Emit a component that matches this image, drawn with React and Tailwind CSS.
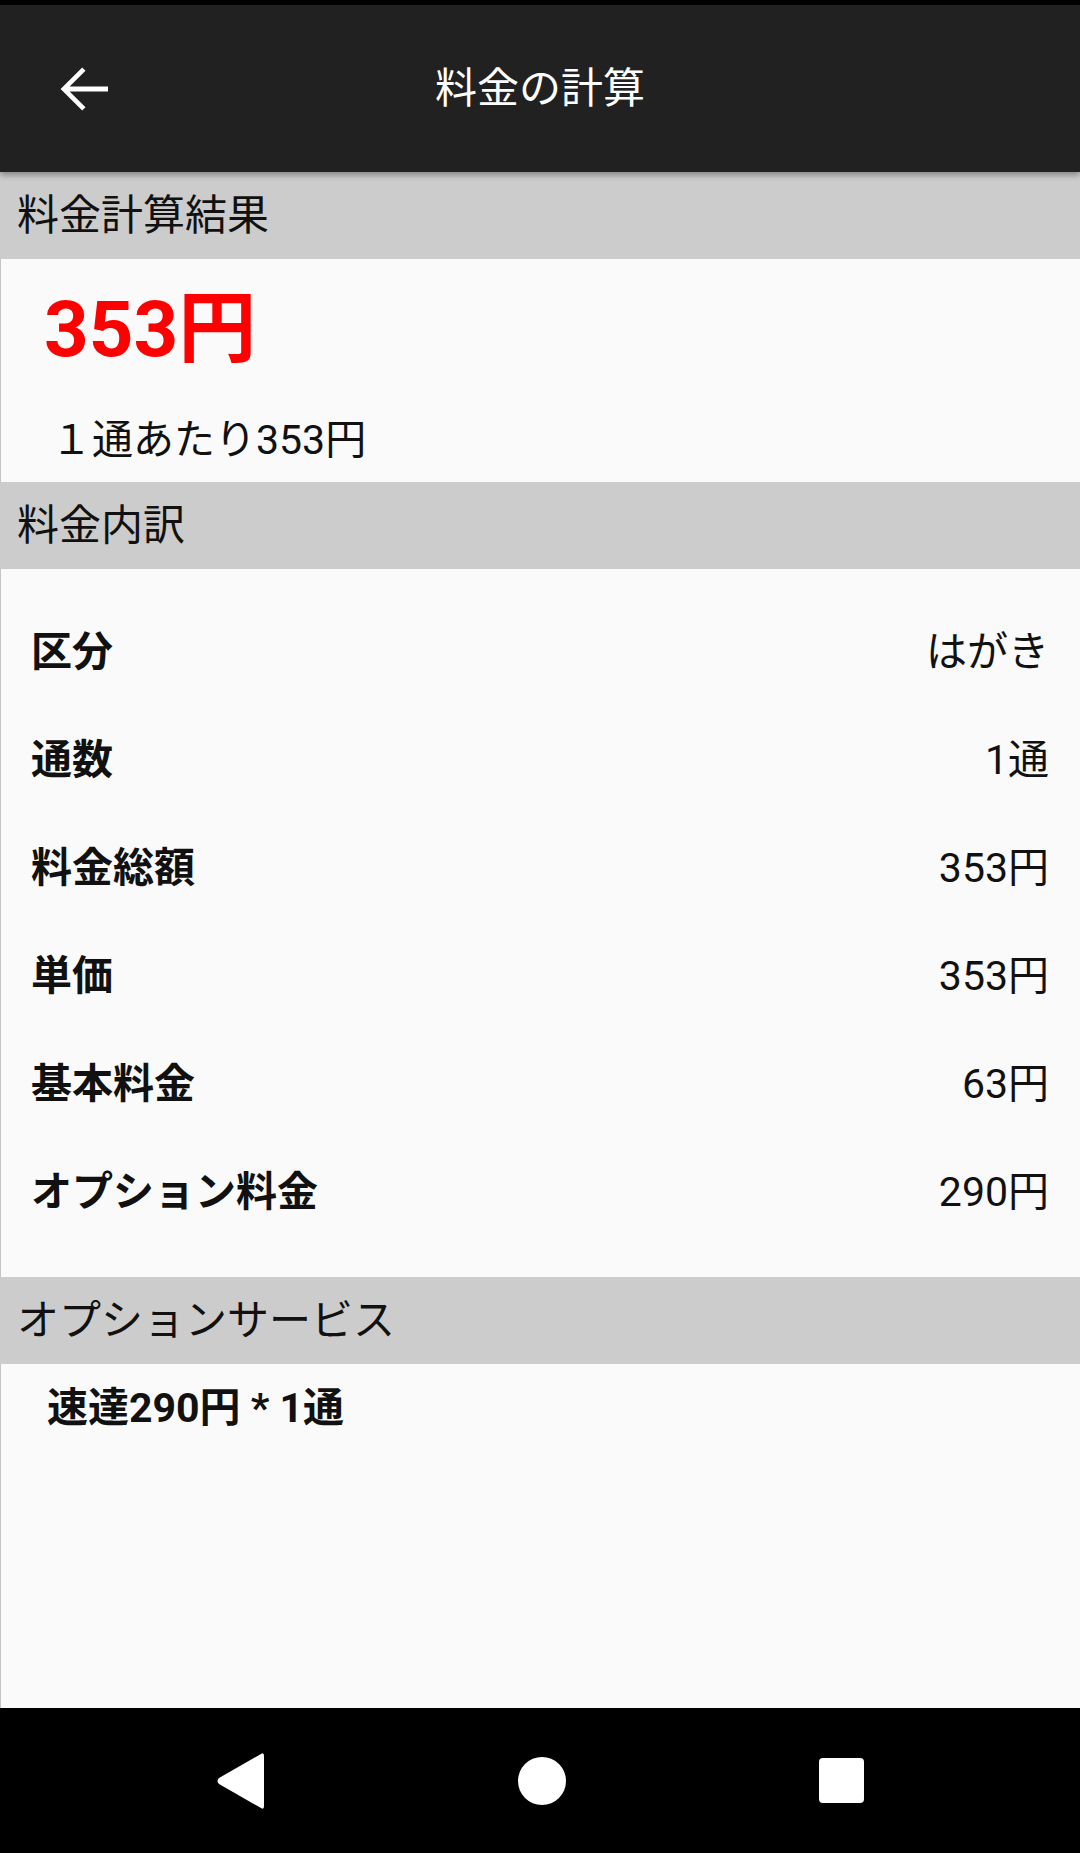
const font = "font-['Roboto','Noto_Sans_CJK_JP',sans-serif]"

const rows = [
  { label: "区分", value: "はがき" },
  { label: "通数", value: "1通" },
  { label: "料金総額", value: "353円" },
  { label: "単価", value: "353円" },
  { label: "基本料金", value: "63円" },
  { label: "オプション料金", value: "290円" },
]

function SectionHeader({ children }) {
  return (
    <div className="h-[87px] shrink-0 bg-[#cccccc] flex items-center pl-[17px] text-[42px] leading-none text-[#111111]">
      {children}
    </div>
  )
}

function App() {
  return (
    <div className={`${font} w-[1080px] h-[1853px] flex flex-col bg-[#fafafa] overflow-hidden`}>
      <div className="h-[5px] shrink-0 bg-black" />

      <header className="relative z-10 h-[167px] shrink-0 bg-[#212121] grid grid-cols-[1fr_auto_1fr] items-center shadow-[0_3px_6px_rgba(0,0,0,0.35)]">
        <div className="pl-[48px] flex items-center">
          <svg viewBox="0 0 24 24" className="w-[72px] h-[72px]" fill="#ffffff">
            <path d="M20 11.2H7.2l5.3-5.3L11.4 4.8 4.2 12l7.2 7.2 1.1-1.1-5.3-5.3H20z" />
          </svg>
        </div>
        <h1 className="text-[42px] leading-none text-white font-normal">料金の計算</h1>
        <div />
      </header>

      <SectionHeader>料金計算結果</SectionHeader>

      <section className="h-[223px] shrink-0 border-l border-[#c4c4c4] flex flex-col pl-[43px]">
        <div className="mt-[31px] h-[80px] leading-[80px] text-[78px] font-bold text-[#ff0000]">353円</div>
        <div className="mt-[46px] h-[48px] leading-[48px] pl-[7px] text-[41px] text-[#111111]">１通あたり353円</div>
      </section>

      <SectionHeader>料金内訳</SectionHeader>

      <section className="h-[708px] shrink-0 border-l border-[#c4c4c4] py-[30px] flex flex-col">
        {rows.map((r) => (
          <div key={r.label} className="h-[108px] flex items-center justify-between pl-[30px] pr-[31px] text-[41px] text-[#111111]">
            <span className="font-bold">{r.label}</span>
            <span>{r.value}</span>
          </div>
        ))}
      </section>

      <SectionHeader>オプションサービス</SectionHeader>

      <section className="flex-1 border-l border-[#c4c4c4] pl-[46px]">
        <div className="mt-[20px] h-[48px] leading-[48px] text-[41px] font-bold text-[#111111]">速達290円 * 1通</div>
      </section>

      <nav className="h-[145px] shrink-0 bg-black flex items-center justify-center gap-[253px]">
        <svg viewBox="0 0 48 56" className="w-[48px] h-[56px]" fill="#ffffff">
          <path d="M44 1 Q47 -1 47 3 L47 53 Q47 57 44 55 L2 31 Q-1 28 2 25 Z" />
        </svg>
        <div className="w-[48px] h-[48px] rounded-full bg-white" />
        <div className="w-[45px] h-[45px] rounded-[4px] bg-white" />
      </nav>
    </div>
  )
}

export default App
